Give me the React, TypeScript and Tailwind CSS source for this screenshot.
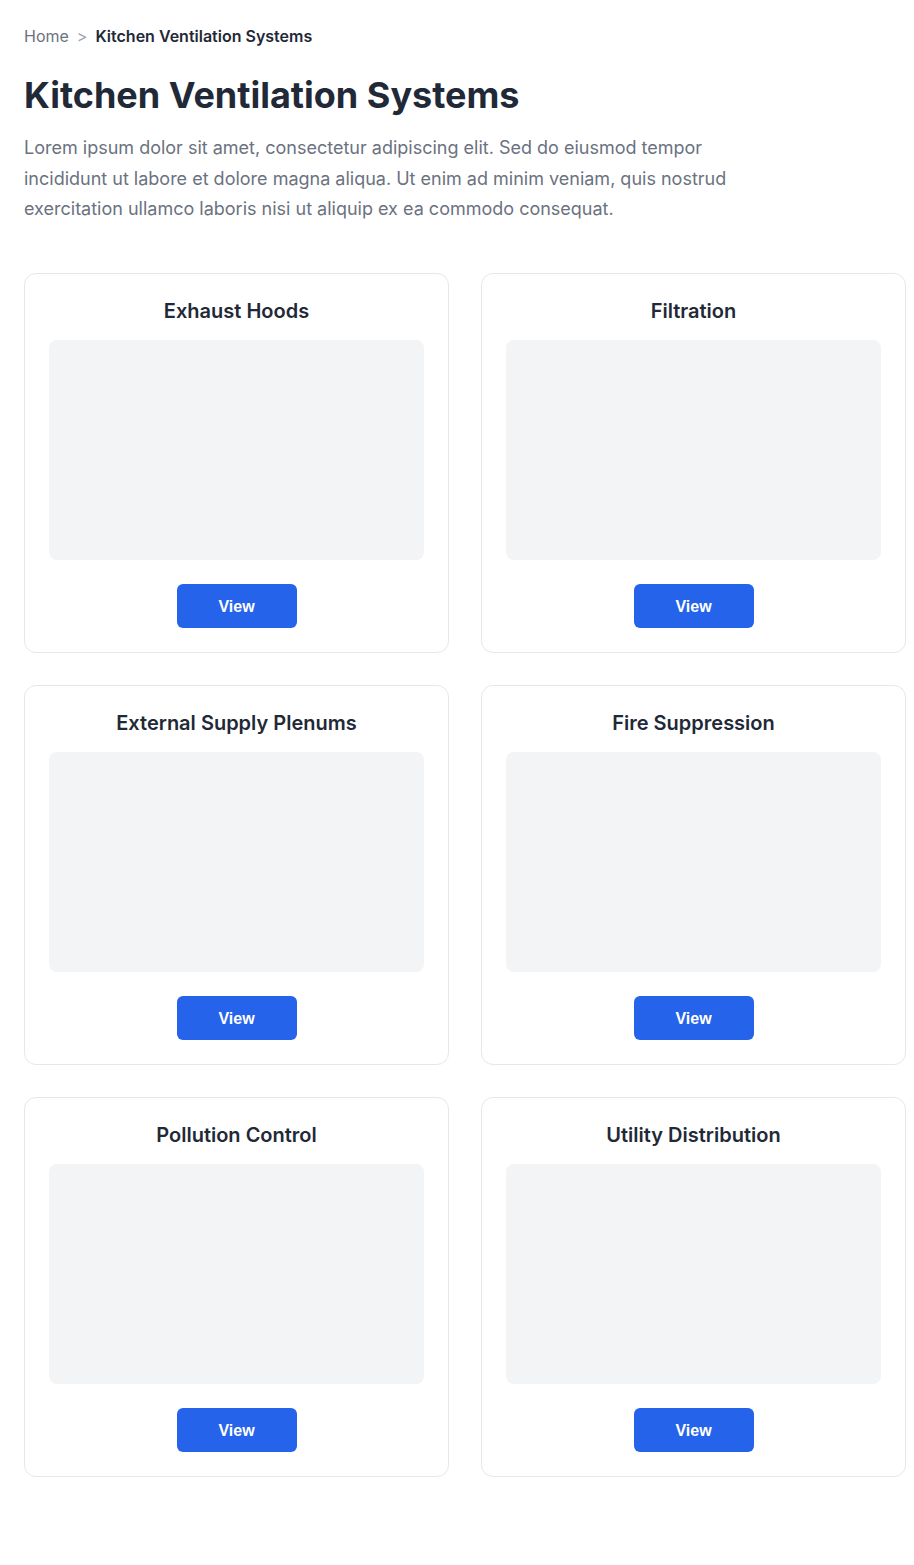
import React from "react";

const categories = [
  "Exhaust Hoods",
  "Filtration",
  "External Supply Plenums",
  "Fire Suppression",
  "Pollution Control",
  "Utility Distribution",
];

const CategoryCard = ({ title }: { title: string }) => {
  return (
    <div className="flex flex-col items-center rounded-xl border border-[#e5e7eb] bg-white p-6">
      <h2 className="mb-4 text-xl leading-[26px] font-semibold text-[#1f2937]">{title}</h2>
      <div className="h-[220px] w-full rounded-lg bg-[#f3f4f6]" />
      <button
        type="button"
        className="mt-6 h-11 w-[120px] rounded-md bg-[#2563eb] pt-0.5 text-base font-bold text-white font-['Liberation_Sans',Arial,sans-serif]"
      >
        View
      </button>
    </div>
  );
};

const App = () => {
  return (
    <div className="min-h-screen bg-white pt-6 pb-20 pl-6 pr-2 font-['Inter',sans-serif]">
      <nav className="flex items-center gap-2 text-base leading-6">
        <a href="#" className="text-[#6b7280]">Home</a>
        <span className="text-[#9ca3af]">&gt;</span>
        <span className="font-semibold text-[#1f2937]">Kitchen Ventilation Systems</span>
      </nav>

      <h1 className="mt-[27px] text-4xl leading-10 font-bold text-[#1f2937]">Kitchen Ventilation Systems</h1>
      <p className="mt-[18px] max-w-[740px] text-lg leading-[30.5px] text-[#6b7280]">
        Lorem ipsum dolor sit amet, consectetur adipiscing elit. Sed do eiusmod tempor incididunt ut labore et
        dolore magna aliqua. Ut enim ad minim veniam, quis nostrud exercitation ullamco laboris nisi ut aliquip
        ex ea commodo consequat.
      </p>

      <div className="mt-12 grid grid-cols-2 gap-8">
        {categories.map((c) => (
          <CategoryCard key={c} title={c} />
        ))}
      </div>
    </div>
  );
};

export default App;
